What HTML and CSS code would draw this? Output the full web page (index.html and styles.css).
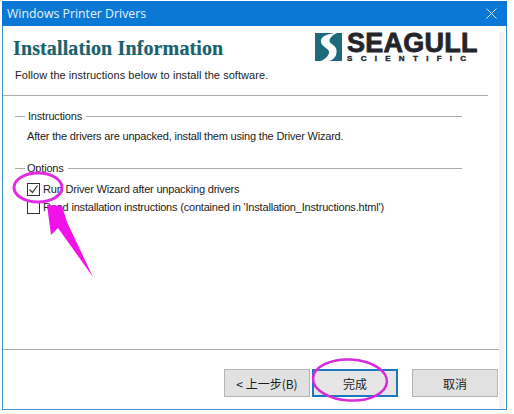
FILE: index.html
```html
<!DOCTYPE html>
<html lang="zh">
<head>
<meta charset="utf-8">
<title>Windows Printer Drivers</title>
<link rel="stylesheet" href="styles.css">
</head>
<body>
<div class="window">
  <div class="titlebar">
    <span class="title">Windows Printer Drivers</span>
    <svg class="close" width="11" height="11" viewBox="0 0 11 11"><path d="M.5.5l10 10M10.5.5l-10 10" stroke="#d5e8f7" stroke-width="1" fill="none"/></svg>
  </div>
  <div class="main">
    <div class="content">
      <header class="header">
        <div class="heading-text">
          <h1>Installation Information</h1>
          <p>Follow the instructions below to install the software.</p>
        </div>
        <div class="logo">
          <svg class="emblem" width="27" height="28" viewBox="0 0 27 28"><rect width="27" height="28" fill="#1c6a7c"/><path d="M20 0C11 1 5 4 6 9c.5 5 8 6 8 10 0 4-4 7-8 9h8c6-2 8-6 7.500-11-.5-5-7-6-7-9 0-3 3-6 7.500-8z" fill="#fff"/></svg>
          <div class="wordmark">
            <span class="seagull">SEAGULL</span>
            <span class="scientific">SCIENTIFIC</span>
          </div>
        </div>
      </header>
      <div class="body">
        <section class="group">
          <div class="legend"><i class="tick"></i><span>Instructions</span><i class="rule"></i></div>
          <p class="info">After the drivers are unpacked, install them using the Driver Wizard.</p>
        </section>
        <section class="group options">
          <div class="legend narrow"><i class="tick"></i><span>Options</span><i class="rule"></i></div>
          <div class="check"><span class="box"><svg width="11" height="11" viewBox="0 0 11 11"><path d="M1.500 5.500l3 3 5-7" stroke="#333" stroke-width="1.200" fill="none"/></svg></span><span>Run Driver Wizard after unpacking drivers</span></div>
          <div class="check"><span class="box"></span><span>Read installation instructions (contained in 'Installation_Instructions.html')</span></div>
        </section>
      </div>
      <footer class="footer">
        <button class="btn back">&lt; 上一步(B)</button>
        <button class="btn primary">完成</button>
        <button class="btn cancel">取消</button>
      </footer>
    </div>
    <div class="strip"></div>
  </div>
</div>
<svg class="marks" width="514" height="414" viewBox="0 0 514 414">
  <ellipse cx="38" cy="187.500" rx="24" ry="14.500" fill="none" stroke="#e32be3" stroke-width="3"/>
  <path d="M47 205L62 206 67 222 93 277 58 228 51 235z" fill="#f012e8"/>
  <ellipse cx="350" cy="380" rx="37" ry="20.500" fill="none" stroke="#d92bd9" stroke-width="2.500" transform="rotate(3 350 380)"/>
</svg>
</body>
</html>
```
FILE: styles.css
```css
* { box-sizing: border-box; }
html, body { margin: 0; padding: 0; background: #fff; }
body { width: 514px; height: 414px; overflow: hidden; position: relative; font-family: "Liberation Sans", "Noto Sans CJK SC", sans-serif; font-size: 11px; color: #1c1c1c; }
.window { width: 505px; height: 409px; margin: 1px 0 0 2px; border: 1px solid #3f8fc9; border-top: 0; display: flex; flex-direction: column; }
.titlebar { height: 25px; margin: 0 -1px; background: #0a78d4; display: flex; align-items: center; justify-content: space-between; padding: 0 10px 0 5px; flex: none; }
.title { font-family: "Open Sans", sans-serif; font-size: 12.300px; color: #e6f2fb; }
.close { display: block; }
.main { flex: 1; display: flex; min-height: 0; }
.content { width: 496px; display: flex; flex-direction: column; }
.strip { width: 5px; margin-top: 6px; background: #f7efe9; }
.header { height: 70px; flex: none; border-bottom: 1px solid #b0aaa3; margin-right: 11px; padding: 11px 0 0 10px; display: flex; position: relative; }
.heading-text { flex: 1; }
h1 { margin: 0; font-family: "Liberation Serif", serif; font-weight: bold; font-size: 20px; line-height: 23px; color: #1a626d; letter-spacing: .13px; -webkit-text-stroke: .2px #1a626d; }
.heading-text p { margin: 8px 0 0 2px; line-height: 14px; letter-spacing: .06px; }
.logo { display: flex; gap: 5px; margin: -4px 18px 0 0; height: 28px; }
.emblem { display: block; }
.wordmark { display: flex; flex-direction: column; width: 123px; }
.seagull { font-weight: bold; font-size: 27px; line-height: 21px; color: #22262b; letter-spacing: .25px; -webkit-text-stroke: .8px #22262b; white-space: nowrap; }
.scientific { margin-top: 1px; font-weight: bold; font-size: 8px; line-height: 7px; letter-spacing: 8.300px; color: #22262b; -webkit-text-stroke: .4px #22262b; white-space: nowrap; }
.body { flex: 1; padding: 13px 0 0 12px; letter-spacing: -.19px; }
.group { width: 447px; }
.legend { display: flex; align-items: center; height: 14px; gap: 3px; }
.legend .tick { width: 10px; border-top: 1px solid #b0aaa3; }
.legend .rule { flex: 1; border-top: 1px solid #b0aaa3; }
.legend span { margin: 0 1px 0 0; }
.legend.narrow span { margin-left: -1px; }
.info { margin: 6px 0 0 12px; line-height: 14px; }
.options { margin-top: 18px; }
.check { display: flex; align-items: center; gap: 3px; height: 18px; margin-left: 12px; }
.options .legend + .check { margin-top: 5px; }
.box { width: 13px; height: 13px; border: 1px solid #333; background: #fff; display: flex; align-items: center; justify-content: center; flex: none; }
.box svg { display: block; }
.footer { height: 60px; flex: none; margin-top: auto; border-top: 1px solid #b0aaa3; padding: 19px 0 0 221px; display: flex; align-items: flex-start; }
.btn { height: 28px; width: 86px; padding: 0; border: 1px solid #b4b4b4; background: #e1e1e1; font-family: "Noto Sans CJK SC", sans-serif; font-size: 12px; color: #1c1c1c; }
.primary { margin-left: 2px; border: 2px solid #1a78c2; background: #e6e6e6; }
.cancel { margin-left: 14px; }
.marks { position: absolute; left: 0; top: 0; pointer-events: none; }
```
